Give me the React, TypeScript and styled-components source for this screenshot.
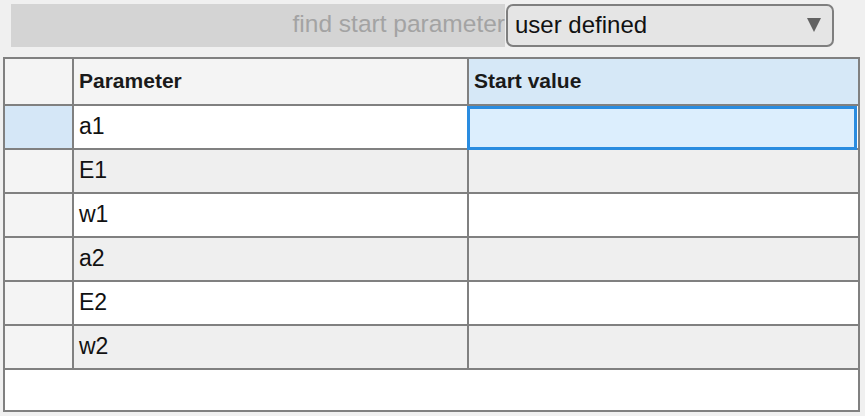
import styled, { createGlobalStyle } from "styled-components";

const GlobalStyle = createGlobalStyle`
    html, body {
        margin: 0;
        padding: 0;
        background: #f0f0f0;
        font-family: "Liberation Sans", Arial, sans-serif;
    }
`

const Page = styled.div`
    width: 865px;
    height: 416px;
    padding: 4px 0 0 3px;
    box-sizing: border-box;
    overflow: hidden;
`

const TopBar = styled.div`
    display: flex;
    height: 43px;
    margin-left: 8px;
`

const FindLabel = styled.div`
    width: 494px;
    height: 43px;
    box-sizing: border-box;
    padding: 0 0 4px 0;
    background: #d4d4d4;
    color: #a3a3a3;
    font-size: 24.5px;
    display: flex;
    align-items: center;
    justify-content: flex-end;
    white-space: nowrap;
    overflow: hidden;
`

const Dropdown = styled.div`
    width: 328px;
    height: 43px;
    margin-left: 1px;
    box-sizing: border-box;
    border: 2px solid #7f7f7f;
    border-radius: 7px;
    background: #e5e5e5;
    display: flex;
    align-items: center;
    justify-content: space-between;
    padding: 0 11px 1px 7px;
    font-size: 24px;
    color: #111;
`

const Arrow = styled.span`
    width: 0;
    height: 0;
    border-left: 7.5px solid transparent;
    border-right: 7.5px solid transparent;
    border-top: 14px solid #626262;
    margin-bottom: 1px;
`

const Table = styled.div`
    width: 857px;
    height: 355px;
    margin-top: 10px;
    box-sizing: border-box;
    border: 2px solid #808080;
    background: #fff;
`

const Row = styled.div<{ $head?: boolean; $alt?: boolean }>`
    display: grid;
    grid-template-columns: 69px 395px 1fr;
    height: ${(p) => (p.$head ? 47 : 44)}px;
    box-sizing: border-box;
    border-bottom: 2px solid #808080;
    background: ${(p) => (p.$alt ? "#efefef" : "#fff")};
`

const RowHead = styled.div<{ $active?: boolean }>`
    border-right: 2px solid #808080;
    background: ${(p) => (p.$active ? "#d5e7f7" : "#f4f4f4")};
`

const HeadCell = styled.div<{ $active?: boolean; $last?: boolean }>`
    display: flex;
    align-items: center;
    padding: 0 0 2px 5px;
    font-size: 21px;
    font-weight: bold;
    color: #1a1a1a;
    border-right: ${(p) => (p.$last ? "none" : "2px solid #808080")};
    background: ${(p) => (p.$active ? "#d6e8f7" : "#f4f4f4")};
`

const Cell = styled.div<{ $last?: boolean }>`
    display: flex;
    align-items: center;
    padding: 0 0 2px 5px;
    font-size: 23px;
    color: #111;
    border-right: ${(p) => (p.$last ? "none" : "2px solid #808080")};
`

const EditCell = styled.div`
    margin: 0 1px -2px -2px;
    border: 3px solid #2a8ce0;
    background: #dceefd;
`

const params = ["a1", "E1", "w1", "a2", "E2", "w2"];

export default function App() {
    return (
        <Page>
            <GlobalStyle />
            <TopBar>
                <FindLabel>find start parameter</FindLabel>
                <Dropdown>
                    <span>user defined</span>
                    <Arrow />
                </Dropdown>
            </TopBar>
            <Table>
                <Row $head>
                    <RowHead />
                    <HeadCell>Parameter</HeadCell>
                    <HeadCell $active $last>Start value</HeadCell>
                </Row>
                {params.map((name, i) => (
                    <Row key={name} $alt={i % 2 === 1}>
                        <RowHead $active={i === 0} />
                        <Cell>{name}</Cell>
                        {i === 0 ? <EditCell /> : <Cell $last />}
                    </Row>
                ))}
            </Table>
        </Page>
    )
}
